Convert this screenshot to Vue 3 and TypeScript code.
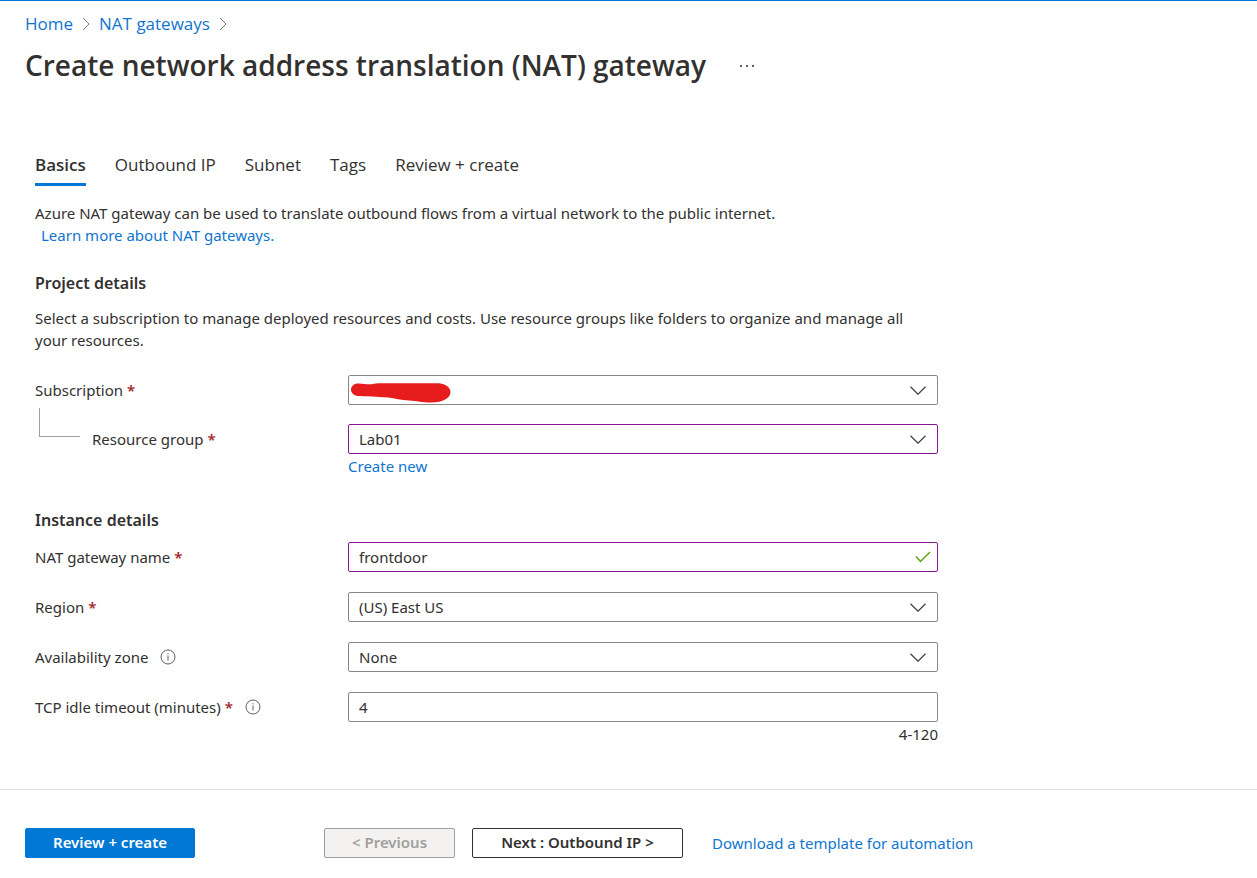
<script setup lang="ts">
import { ref } from 'vue'

const tabs: string[] = ['Basics', 'Outbound IP', 'Subnet', 'Tags', 'Review + create']
const activeTab = ref<string>('Basics')

const subscription = ref<string>('')
const resourceGroup = ref<string>('Lab01')
const gatewayName = ref<string>('frontdoor')
const region = ref<string>('(US) East US')
const zone = ref<string>('None')
const idleTimeout = ref<string>('4')
</script>

<template>
  <div class="page">
    <header class="top">
      <nav class="crumbs" aria-label="Breadcrumb">
        <a href="#">Home</a>
        <svg class="crumb-arrow" viewBox="0 0 8 14" aria-hidden="true"><path d="M1 1l6 6-6 6" /></svg>
        <a href="#">NAT gateways</a>
        <svg class="crumb-arrow" viewBox="0 0 8 14" aria-hidden="true"><path d="M1 1l6 6-6 6" /></svg>
      </nav>
      <div class="title-row">
        <h1>Create network address translation (NAT) gateway</h1>
        <button type="button" class="more" aria-label="More actions">
          <svg viewBox="0 0 14 4" aria-hidden="true">
            <rect x="0" y="2" width="2" height="2" /><rect x="6" y="2" width="2" height="2" /><rect x="12" y="2" width="2" height="2" />
          </svg>
        </button>
      </div>
    </header>

    <main class="content">
      <div class="tabs" role="tablist">
        <button
          v-for="tab in tabs"
          :key="tab"
          type="button"
          role="tab"
          class="tab"
          :class="{ active: tab === activeTab }"
          :aria-selected="tab === activeTab"
          @click="activeTab = tab"
        >{{ tab }}</button>
      </div>

      <p class="intro">
        Azure NAT gateway can be used to translate outbound flows from a virtual network to the public internet.
        <a href="#" class="learn">Learn more about NAT gateways.</a>
      </p>

      <h2>Project details</h2>
      <p class="help">
        Select a subscription to manage deployed resources and costs. Use resource groups like folders to organize and manage all your resources.
      </p>

      <div class="fields project">
        <div class="row">
          <label for="subscription">Subscription <span class="req">*</span></label>
          <div class="control">
            <select id="subscription" v-model="subscription"><option value=""></option></select>
            <svg class="scribble" viewBox="0 0 100 20" aria-hidden="true">
              <path d="M6 0.5C11 0 16 1.8 21 1.2C23 0.4 26 0.2 30 0.2L88 0.2C95 1 99.500 4.500 99.500 9C99.500 15 92 19.500 80 19.500C71 19.500 66 18 58 17.500C50 17.300 44 15.500 37 14.500C26 13.500 14 13.500 6 13C2 12 0 9.500 0 7C0 3.500 2.500 1 6 0.500Z" />
            </svg>
            <svg class="chevron" viewBox="0 0 16 9" aria-hidden="true"><path d="M.5.7L8 8.200 15.500.7" /></svg>
          </div>
        </div>
        <div class="row">
          <div class="child-label">
            <span class="connector"></span>
            <label for="resource-group">Resource group <span class="req">*</span></label>
          </div>
          <div class="control">
            <select id="resource-group" v-model="resourceGroup" class="changed"><option>Lab01</option></select>
            <svg class="chevron" viewBox="0 0 16 9" aria-hidden="true"><path d="M.5.7L8 8.200 15.500.7" /></svg>
          </div>
          <a href="#" class="below">Create new</a>
        </div>
      </div>

      <h2 class="instance-heading">Instance details</h2>
      <div class="fields instance">
        <div class="row">
          <label for="gateway-name">NAT gateway name <span class="req">*</span></label>
          <div class="control">
            <input id="gateway-name" v-model="gatewayName" type="text" class="changed" />
            <svg class="tick" viewBox="0 0 16 12" aria-hidden="true"><path d="M1 5.500L5.500 10.500 15 1" /></svg>
          </div>
        </div>
        <div class="row">
          <label for="region">Region <span class="req">*</span></label>
          <div class="control">
            <select id="region" v-model="region"><option>(US) East US</option></select>
            <svg class="chevron" viewBox="0 0 16 9" aria-hidden="true"><path d="M.5.7L8 8.200 15.500.7" /></svg>
          </div>
        </div>
        <div class="row">
          <div class="info-label">
            <label for="zone">Availability zone</label>
            <svg class="info" viewBox="0 0 16 16" aria-hidden="true"><circle cx="8" cy="8" r="7" /><path d="M8 6.500v5M8 4.200v1.200" /></svg>
          </div>
          <div class="control">
            <select id="zone" v-model="zone"><option>None</option></select>
            <svg class="chevron" viewBox="0 0 16 9" aria-hidden="true"><path d="M.5.7L8 8.200 15.500.7" /></svg>
          </div>
        </div>
        <div class="row">
          <div class="info-label">
            <label for="timeout">TCP idle timeout (minutes) <span class="req">*</span></label>
            <svg class="info" viewBox="0 0 16 16" aria-hidden="true"><circle cx="8" cy="8" r="7" /><path d="M8 6.500v5M8 4.200v1.200" /></svg>
          </div>
          <div class="control">
            <input id="timeout" v-model="idleTimeout" type="text" aria-describedby="timeout-range" />
          </div>
          <span id="timeout-range" class="below range">4-120</span>
        </div>
      </div>
    </main>

    <footer class="actions">
      <button type="button" class="btn primary">Review + create</button>
      <button type="button" class="btn previous" disabled>&lt; Previous</button>
      <button type="button" class="btn next">Next : Outbound IP &gt;</button>
      <a href="#" class="download">Download a template for automation</a>
    </footer>
  </div>
</template>

<style>
body {
  margin: 0;
  background: #fff;
}
</style>

<style scoped>
.page {
  display: flex;
  flex-direction: column;
  box-sizing: border-box;
  min-height: 100vh;
  border-top: 1px solid #0078d4;
  color: #323130;
  font-family: "Noto Sans", "Open Sans", sans-serif;
  font-size: 15px;
  line-height: 22px;
}
a {
  color: #0f75cf;
  text-decoration: none;
}
a:hover {
  text-decoration: underline;
}
button,
input,
select {
  font: inherit;
  color: inherit;
}
.top {
  padding: 11px 25px 0;
}
.crumbs {
  display: flex;
  align-items: center;
  gap: 9px;
  font-family: "Open Sans", "Noto Sans", sans-serif;
  font-size: 17px;
  line-height: 24px;
}
.crumb-arrow {
  width: 8px;
  height: 14px;
  fill: none;
  stroke: #797775;
}
.title-row {
  display: flex;
  align-items: center;
  gap: 26px;
  margin-top: 9px;
}
h1 {
  margin: 0;
  font-family: "Open Sans", "Noto Sans", sans-serif;
  font-size: 28px;
  font-weight: 600;
  line-height: 40px;
}
.more {
  display: flex;
  padding: 8px;
  border: 0;
  background: none;
}
.more svg {
  width: 14px;
  height: 4px;
  fill: #605e5c;
}
.content {
  flex: 1;
  max-width: 903px;
  padding: 68px 35px 0;
}
.tabs {
  display: flex;
  gap: 29px;
}
.tab {
  padding: 0 0 6px;
  border: 0;
  border-bottom: 3px solid transparent;
  background: none;
  font-family: "Open Sans", "Noto Sans", sans-serif;
  font-size: 17px;
  line-height: 24px;
}
.tab.active {
  border-color: #0078d4;
  font-weight: 600;
}
.intro {
  margin: 16px 0 0;
}
.learn {
  display: block;
  padding-left: 6px;
}
h2 {
  margin: 25px 0 12px;
  font-size: 16px;
  font-weight: 600;
  line-height: 24px;
}
.help {
  margin: 0;
}
.fields {
  display: flex;
  flex-direction: column;
  gap: 20px;
}
.project {
  gap: 19px;
  margin-top: 24px;
}
.instance-heading {
  margin: 31px 0 10px;
}
.row {
  display: grid;
  grid-template-columns: 313px 1fr;
  align-items: center;
  row-gap: 1px;
}
.req {
  color: #a4262c;
  font-weight: 600;
}
.child-label,
.info-label {
  display: flex;
  align-items: center;
  gap: 12px;
}
.connector {
  box-sizing: border-box;
  width: 41px;
  height: 29px;
  margin: -34px 0 0 4px;
  border: solid #a19f9d;
  border-width: 0 0 1px 1px;
}
.info {
  width: 16px;
  height: 16px;
  fill: none;
  stroke: #605e5c;
}
.control {
  position: relative;
  height: 30px;
}
.control input,
.control select {
  box-sizing: border-box;
  display: block;
  width: 100%;
  height: 30px;
  margin: 0;
  padding: 0 10px;
  border: 1px solid #8a8886;
  border-radius: 2px;
  background: #fff;
  appearance: none;
}
.control .changed {
  border-color: #881798;
}
.chevron,
.tick,
.scribble {
  position: absolute;
  pointer-events: none;
  fill: none;
}
.chevron {
  top: 11px;
  right: 12px;
  width: 16px;
  height: 9px;
  stroke: #484644;
  stroke-width: 1.3;
}
.tick {
  top: 9px;
  right: 7px;
  width: 16px;
  height: 12px;
  stroke: #57a300;
  stroke-width: 1.4;
}
.scribble {
  top: 8px;
  left: 3px;
  width: 100px;
  height: 20px;
  fill: #e71d1d;
}
.below {
  grid-column: 2;
  justify-self: start;
}
.range {
  justify-self: end;
}
.actions {
  display: flex;
  align-items: center;
  padding: 38px 25px 20px;
  border-top: 1px solid #e1dfdd;
}
.btn {
  box-sizing: border-box;
  height: 30px;
  padding: 0 25px 2px;
  border: 1px solid #323130;
  border-radius: 2px;
  background: #fff;
  font-weight: 600;
  line-height: 22px;
  white-space: nowrap;
}
.primary {
  min-width: 170px;
  border-color: #0078d4;
  background: #0078d4;
  color: #fff;
}
.previous {
  min-width: 131px;
  margin-left: 129px;
  border-color: #a19f9d;
  background: #f3f2f1;
  color: #a19f9d;
}
.next {
  min-width: 211px;
  margin-left: 17px;
}
.download {
  margin-left: 29px;
}
</style>
